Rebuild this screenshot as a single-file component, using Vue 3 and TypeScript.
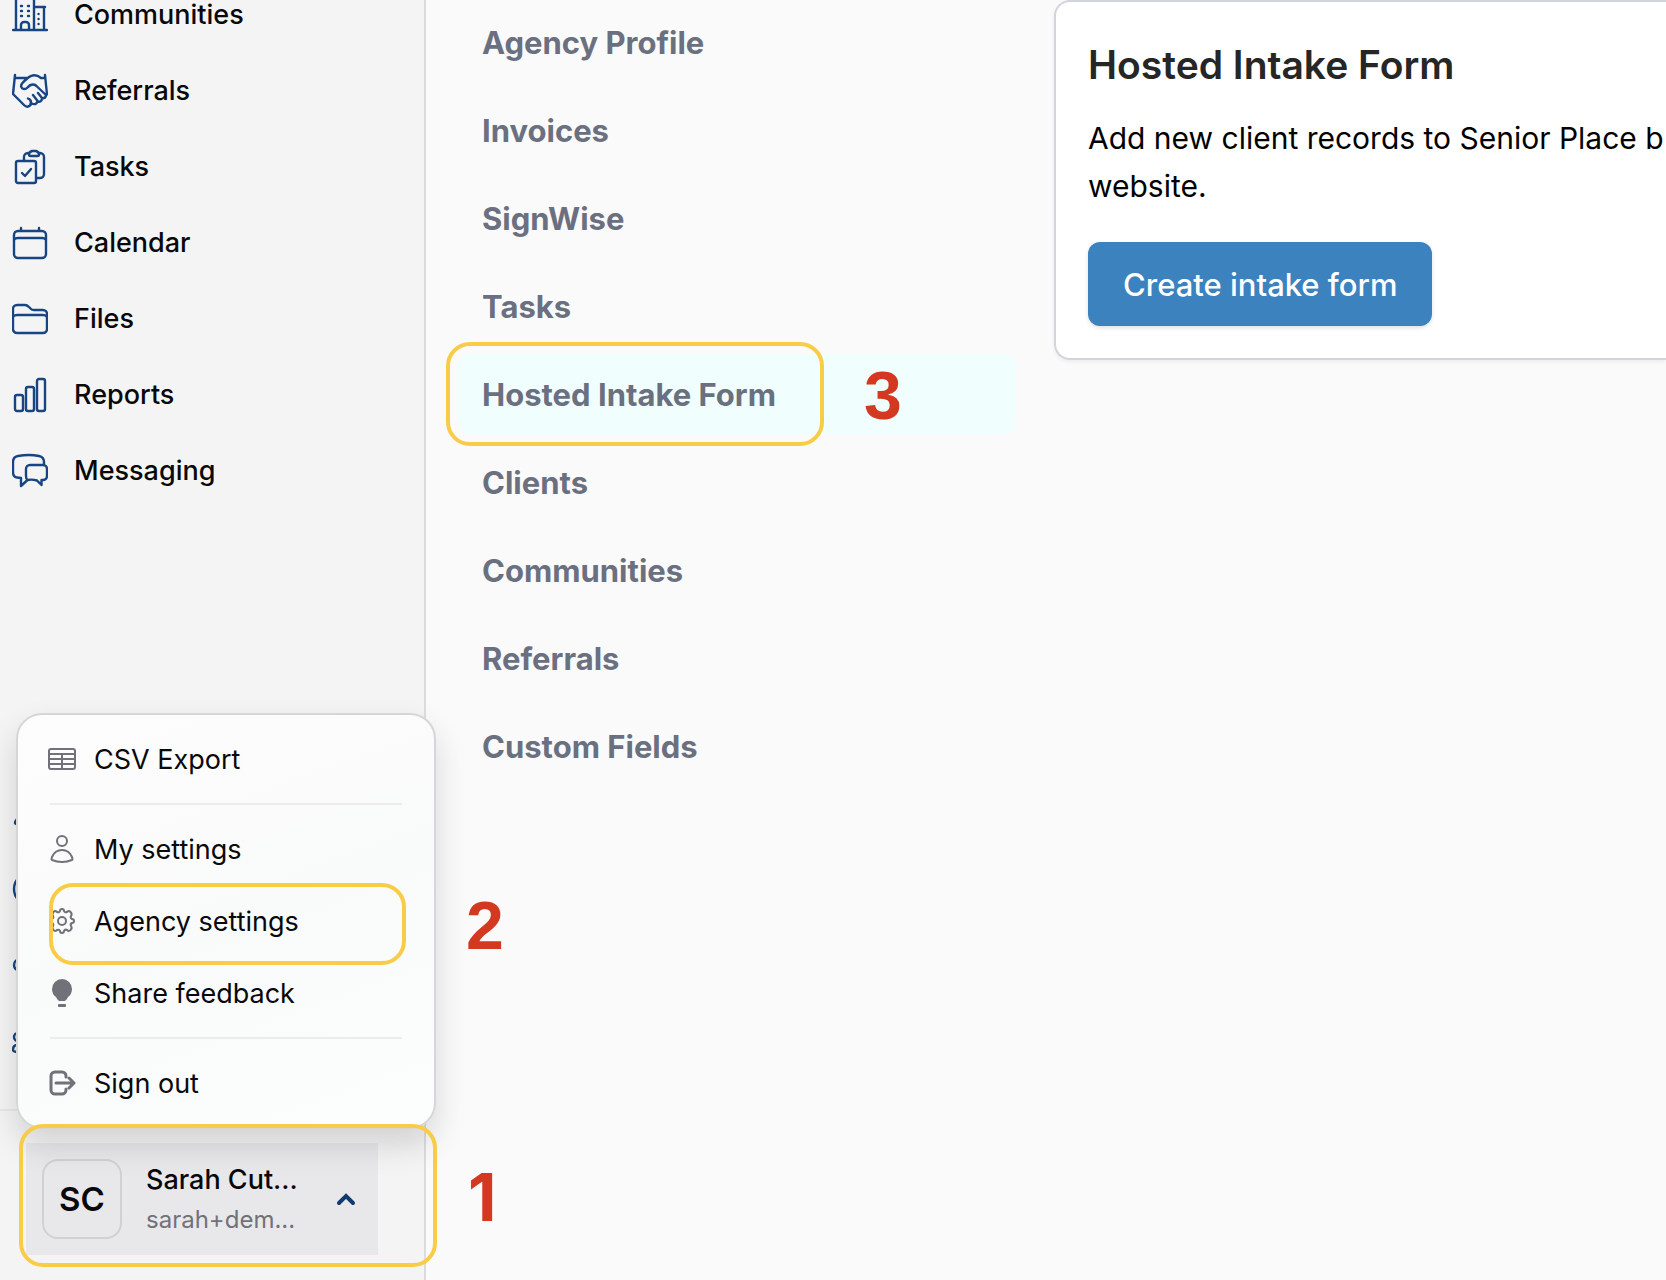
<script setup lang="ts">
import { ref } from 'vue'

interface NavItem {
  label: string
  icon: string
}

const mainNav: NavItem[] = [
  {
    label: 'Communities',
    icon: 'M1 33H35M4 33V1H22V33M22 10H33M32 10V33M9 33V28a3 3 0 0 1 3-3h2a3 3 0 0 1 3 3v5M9 9h1M16 9h1M9 14h1M16 14h1M9 19h1M16 19h1M26.500 17h.1M26.500 22h.1M26.500 27h.1',
  },
  {
    label: 'Referrals',
    icon: 'M3 2L1 21L12 32Q15 35 18 32.500L20 30.500Q24 32.500 25.500 28.500Q29.500 29.500 30 25.500Q34 25.500 34 21.500H35L33 2M3 5H16M33 5H29Q24 1 19 3Q16 4 10 10.500Q8 13.500 10.500 15.500Q13 17 15.500 14.500Q18 11.500 21 11.500Q23.500 11.500 25 13.500L34 22M26 20L30 25M21 22L26 28.500M16 25.500Q20 27 18.500 31',
  },
  {
    label: 'Tasks',
    icon: 'M6 12H22a2 2 0 0 1 2 2V32a2 2 0 0 1-2 2H6a2 2 0 0 1-2-2V14a2 2 0 0 1 2-2ZM10 24L13 27L19 20M12 12V8a4 4 0 0 1 4-4H17M27 4H28a4 4 0 0 1 4 4V25a4 4 0 0 1-4 4H24M20 2H24Q27 3 27 5.500Q27 7 25.500 7H18.500Q17 7 17 5.500Q17 3 20 2Z',
  },
  {
    label: 'Calendar',
    icon: 'M6 6H30a4 4 0 0 1 4 4V29a4 4 0 0 1-4 4H6a4 4 0 0 1-4-4V10a4 4 0 0 1 4-4ZM2 15Q3 13 6 13H30Q33 13 34 15M9 6V3M27 6V3',
  },
  {
    label: 'Files',
    icon: 'M1 28V8a4 4 0 0 1 4-4H13Q15 4 17 6L19 8Q20 9 22 9H31a4 4 0 0 1 4 4V28a4 4 0 0 1-4 4H5a4 4 0 0 1-4-4ZM1 16Q2 14 5 14H31Q34 14 35 16',
  },
  {
    label: 'Reports',
    icon: 'M5 18H9a2 2 0 0 1 2 2V32a2 2 0 0 1-2 2H5a2 2 0 0 1-2-2V20a2 2 0 0 1 2-2ZM16 10H20a2 2 0 0 1 2 2V32a2 2 0 0 1-2 2H16a2 2 0 0 1-2-2V12a2 2 0 0 1 2-2ZM27 2H31a2 2 0 0 1 2 2V32a2 2 0 0 1-2 2H27a2 2 0 0 1-2-2V4a2 2 0 0 1 2-2Z',
  },
  {
    label: 'Messaging',
    icon: 'M32 12V9Q32 4 27 3Q17 1 6 3Q1 4 1 9V19Q1 24 5 24.500L9 25V33L15.500 27M18 12H31a4 4 0 0 1 4 4V23a4 4 0 0 1-4 4H29.500V32L25 27.500Q20 26 15.500 27Q14 26 14 23V16a4 4 0 0 1 4-4Z',
  },
]

const helpIcons: string[] = [
  'M18 3Q9 4 9 14V18Q9 21 5 24Q1 29 5 29H31Q35 29 31 24Q27 21 27 18V14Q27 4 18 3Z',
  'M18 2a16 16 0 1 0 0 32a16 16 0 1 0 0-32ZM18 17V26M18 10V11',
  'M8 12a6 6 0 1 0 0 12a6 6 0 1 0 0-12ZM29 3a5 5 0 1 0 0 10a5 5 0 1 0 0-10ZM29 23a5 5 0 1 0 0 10a5 5 0 1 0 0-10ZM13 15L24 9M13 21L24 27',
  'M6 10a4 4 0 1 0 0 8a4 4 0 1 0 0-8ZM18 4a5 5 0 1 0 0 10a5 5 0 1 0 0-10ZM8 22H5Q1 22 1 27Q1 29 8 29M9 30Q9 19 18 19Q27 19 27 30Z',
]

const settingsNav: string[] = [
  'Agency Profile',
  'Invoices',
  'SignWise',
  'Tasks',
  'Hosted Intake Form',
  'Clients',
  'Communities',
  'Referrals',
  'Custom Fields',
]
const activeSetting = ref('Hosted Intake Form')
</script>

<template>
  <div class="page">
    <aside class="sidebar">
      <nav class="main-nav">
        <a v-for="item in mainNav" :key="item.label" href="#" class="nav-link">
          <svg class="nav-icon" viewBox="0 0 36 36" aria-hidden="true"><path :d="item.icon" /></svg>
          <span>{{ item.label }}</span>
        </a>
      </nav>

      <div class="help-nav" aria-hidden="true">
        <div v-for="icon in helpIcons" :key="icon" class="nav-link">
          <svg class="nav-icon" viewBox="0 0 36 36"><path :d="icon" /></svg>
        </div>
      </div>

      <footer class="account">
        <button type="button" class="profile">
          <span class="avatar">SC</span>
          <span class="who">
            <span class="name">Sarah Cut...</span>
            <span class="email">sarah+dem...</span>
          </span>
          <svg class="chevron" viewBox="0 0 20 14" aria-hidden="true"><path d="M3 11L10 4L17 11" /></svg>
        </button>

        <div class="menu">
          <a href="#" class="menu-item">
            <svg class="menu-icon" viewBox="0 0 28 28" aria-hidden="true">
              <rect x="1" y="4" width="26" height="20" rx="2" /><path d="M1 9H27M1 14H27M1 19H27M14 9V24" />
            </svg>
            CSV Export
          </a>
          <hr />
          <a href="#" class="menu-item">
            <svg class="menu-icon" viewBox="0 0 28 28" aria-hidden="true">
              <circle cx="14" cy="6" r="5" /><path d="M4 25Q3 25 4 22Q7 15 14 15Q21 15 24 22Q25 25 24 25Q14 29 4 25Z" />
            </svg>
            My settings
          </a>
          <a href="#" class="menu-item">
            <svg class="menu-icon" viewBox="0 0 28 28" aria-hidden="true">
              <circle cx="14" cy="14" r="4" />
              <path d="M12 4Q12 2 14 2Q16 2 16 4Q17 6 19 5Q21 3 22.500 5Q24.500 7 23 9Q22 11 24 12Q26 12 26 14Q26 16 24 16Q22 17 23 19Q24.500 21 22.500 23Q21 25 19 23Q17 22 16 24Q16 26 14 26Q12 26 12 24Q11 22 9 23Q7 25 5.500 23Q3.500 21 5 19Q6 17 4 16Q2 16 2 14Q2 12 4 12Q6 11 5 9Q3.500 7 5.500 5Q7 3 9 5Q11 6 12 4Z" />
            </svg>
            Agency settings
            <span class="ring ring-menu"></span>
            <span class="step step-menu">2</span>
          </a>
          <a href="#" class="menu-item">
            <svg class="menu-icon filled" viewBox="0 0 28 28" aria-hidden="true">
              <path d="M14 0a10 10 0 0 1 10 10Q24 15 20 18Q18 22 16.500 22H11.500Q10 22 8 18Q4 15 4 10A10 10 0 0 1 14 0Z" /><rect x="10" y="25" width="8" height="3" rx="1" />
            </svg>
            Share feedback
          </a>
          <hr />
          <a href="#" class="menu-item">
            <svg class="menu-icon bold" viewBox="0 0 28 28" aria-hidden="true">
              <path d="M18 8V7a4 4 0 0 0-4-4H7a4 4 0 0 0-4 4V21a4 4 0 0 0 4 4H14a4 4 0 0 0 4-4V20M8 14H26M21 9L26 14L21 19" />
            </svg>
            Sign out
          </a>
        </div>
        <span class="ring ring-account"></span>
        <span class="step step-account">1</span>
      </footer>
    </aside>

    <main class="content">
      <nav class="settings-nav">
        <a
          v-for="label in settingsNav"
          :key="label"
          href="#"
          class="settings-link"
          :class="{ active: label === activeSetting }"
          @click.prevent="activeSetting = label"
        >
          {{ label }}
          <template v-if="label === 'Hosted Intake Form'">
            <span class="ring ring-setting"></span>
            <span class="step step-setting">3</span>
          </template>
        </a>
      </nav>

      <section class="card">
        <h1>Hosted Intake Form</h1>
        <p>Add new client records to Senior Place b<br />website.</p>
        <button type="button" class="primary">Create intake form</button>
      </section>
    </main>
  </div>
</template>

<style>
body {
  margin: 0;
  background: #fafafa;
}
</style>

<style scoped>
.page {
  display: flex;
  min-height: 100vh;
  overflow: hidden;
  background: #fafafa;
  color: #09090b;
  font-family: Inter, "Liberation Sans", sans-serif;
}

a {
  color: inherit;
  text-decoration: none;
}

.sidebar {
  position: relative;
  z-index: 1;
  display: flex;
  flex: 0 0 424px;
  flex-direction: column;
  background: #f4f4f4;
  border-right: 2px solid #dcdcde;
}

.main-nav,
.help-nav {
  display: flex;
  flex-direction: column;
  gap: 46px;
}

.nav-link {
  display: flex;
  align-items: center;
  gap: 26px;
  height: 30px;
  padding-left: 12px;
  font-size: 27px;
  line-height: 30px;
  font-weight: 500;
}

.nav-icon {
  flex: none;
  width: 36px;
  height: 36px;
  fill: none;
  stroke: #174482;
  stroke-width: 2.400;
  stroke-linecap: round;
  stroke-linejoin: round;
}

.help-nav {
  margin-top: auto;
  margin-bottom: 53px;
}

.account {
  position: relative;
  padding: 32px 46px 25px 26px;
  border-top: 2px solid #e8e8ea;
}

.profile {
  display: flex;
  align-items: center;
  width: 100%;
  height: 112px;
  padding: 0 22px 0 16px;
  border: 0;
  background: #e8e8ea;
  color: inherit;
  font-family: inherit;
  text-align: left;
}

.avatar {
  display: flex;
  align-items: center;
  justify-content: center;
  width: 76px;
  height: 76px;
  border: 2px solid #d1d1d4;
  border-radius: 16px;
  font-size: 33px;
  font-weight: 600;
}

.who {
  display: flex;
  flex: 1;
  flex-direction: column;
  margin-left: 24px;
  padding-top: 2px;
}

.name {
  font-size: 27px;
  line-height: 40px;
  font-weight: 500;
}

.email {
  color: #71717a;
  font-size: 24px;
  line-height: 40px;
}

.chevron {
  width: 20px;
  height: 14px;
  fill: none;
  stroke: #123a70;
  stroke-width: 4;
  stroke-linecap: round;
}

.menu {
  position: absolute;
  bottom: 151px;
  left: 16px;
  box-sizing: border-box;
  width: 420px;
  padding: 8px 30px;
  border: 2px solid #d6d6d8;
  border-radius: 26px;
  background: linear-gradient(160deg, #fdfdfd, #f9fafa 50%, #fcfdfd);
  box-shadow: 0 16px 32px rgba(0, 0, 0, 0.14);
}

.menu hr {
  height: 2px;
  margin: 8px 2px;
  border: 0;
  background: #ececee;
}

.menu-item {
  position: relative;
  display: flex;
  align-items: center;
  gap: 18px;
  height: 72px;
  font-size: 27px;
}

.menu-icon {
  width: 28px;
  height: 28px;
  fill: none;
  stroke: #71717a;
  stroke-width: 2;
  stroke-linejoin: round;
  stroke-linecap: round;
}

.menu-icon.filled {
  fill: #71717a;
  stroke: none;
}

.menu-icon.bold {
  stroke-width: 3;
}

.ring {
  position: absolute;
  box-sizing: border-box;
  border: 4px solid #f8cc46;
  border-radius: 24px;
  pointer-events: none;
}

.step {
  position: absolute;
  color: #d23920;
  font-family: "Liberation Sans", sans-serif;
  font-size: 68px;
  line-height: 72px;
  font-weight: 700;
}

.ring-menu {
  inset: -2px -2px -8px 1px;
}

.step-menu {
  top: 4px;
  left: 418px;
}

.ring-account {
  inset: 13px -13px 13px 19px;
}

.step-account {
  top: 50px;
  left: 468px;
  font-family: Inter, sans-serif;
  font-size: 66px;
}

.content {
  display: flex;
  flex: 1;
  align-items: flex-start;
  gap: 38px;
  min-width: 0;
  padding-left: 32px;
}

.settings-nav {
  display: flex;
  flex: 0 0 558px;
  flex-direction: column;
  gap: 8px;
  padding-top: 2px;
}

.settings-link {
  position: relative;
  display: flex;
  align-items: center;
  height: 80px;
  padding-left: 24px;
  border-radius: 12px;
  color: #6b7080;
  font-size: 31px;
  font-weight: 650;
}

.settings-link.active {
  background: #f0fffe;
}

.ring-setting {
  inset: -12px 192px -12px -12px;
}

.step-setting {
  top: 5px;
  left: 406px;
}

.card {
  flex: 1;
  box-sizing: border-box;
  min-width: 0;
  padding: 39px 0 32px 32px;
  border: 2px solid #d1d5db;
  border-right: 0;
  border-radius: 16px 0 0 16px;
  background: #fff;
  box-shadow: 0 2px 4px rgba(0, 0, 0, 0.06);
}

.card h1 {
  margin: 0;
  color: #262626;
  font-size: 39px;
  line-height: 48px;
  font-weight: 600;
}

.card p {
  margin: 25px 0 32px;
  color: #000;
  font-size: 30px;
  line-height: 48px;
  white-space: nowrap;
}

.primary {
  height: 84px;
  padding: 0 35px;
  border: 0;
  border-radius: 12px;
  background: #3b82bf;
  box-shadow: 0 2px 4px rgba(0, 0, 0, 0.12);
  color: #fff;
  font-family: inherit;
  font-size: 31px;
  font-weight: 500;
}
</style>
